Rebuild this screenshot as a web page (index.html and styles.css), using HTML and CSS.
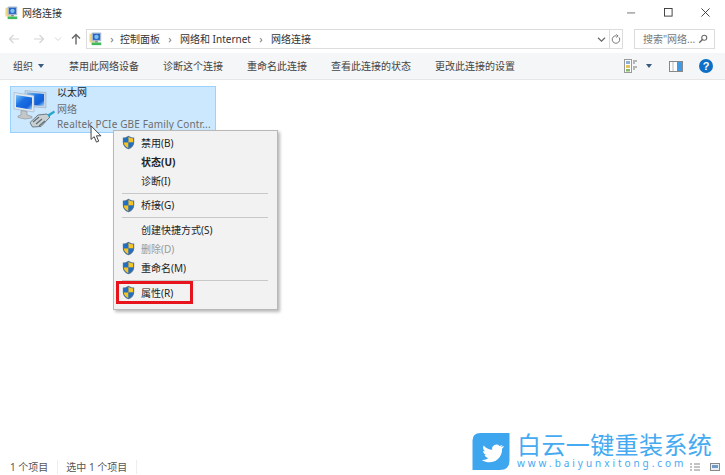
FILE: index.html
```html
<!DOCTYPE html>
<html lang="zh">
<head>
<meta charset="utf-8">
<title>网络连接</title>
<link rel="stylesheet" href="styles.css">
</head>
<body>
<svg class="defs" width="0" height="0" aria-hidden="true">
  <defs>
    <linearGradient id="scr" x1="0" y1="0" x2="1" y2="1">
      <stop offset="0" stop-color="#7cc4f6"/>
      <stop offset=".4" stop-color="#1a70e4"/>
      <stop offset=".75" stop-color="#1260d8"/>
      <stop offset="1" stop-color="#a8d8fa"/>
    </linearGradient>
    <symbol id="shield" viewBox="0 0 14 16">
      <path d="M7 .6C5 2 3 2.600.9 2.700v5.200c0 3.400 2.400 5.900 6.100 7.500 3.700-1.600 6.100-4.100 6.100-7.500V2.700C11 2.600 9 2 7 .6z" fill="#4f7096"/>
      <path d="M7 1.800V8H2V3.700C3.800 3.500 5.500 3 7 1.800z" fill="#1f6fc4"/>
      <path d="M7 1.800c1.500 1.200 3.200 1.700 5 1.900V8H7z" fill="#f8c624"/>
      <path d="M2 8h5v6.100C4 12.700 2 10.700 2 8z" fill="#f8c624"/>
      <path d="M7 8h5c0 2.700-2 4.700-5 6.100z" fill="#1f6fc4"/>
    </symbol>
    <symbol id="net" viewBox="0 0 16 16">
      <rect x="0.500" y="2" width="6" height="10" fill="#f0d884"/>
      <rect x="3" y="0.500" width="11" height="10" rx="1" fill="#a9bbd0"/>
      <rect x="4.500" y="2" width="8" height="7" fill="#2462c8"/>
      <circle cx="8.500" cy="5.500" r="2.500" fill="#7cc0ee"/>
      <rect x="7" y="10" width="3" height="2" fill="#8a8a8a"/>
      <rect x="3" y="12" width="11" height="3" fill="#3fba5a"/>
    </symbol>
  </defs>
</svg>

<div class="window">
  <header class="titlebar">
    <svg class="ti-icon"><use href="#net"/></svg>
    <span class="ti-text">网络连接</span>
    <div class="winbtns">
      <svg class="wb" viewBox="0 0 10 10"><path d="M0 5.500h9" stroke="#666" fill="none"/></svg>
      <svg class="wb" viewBox="0 0 10 10"><rect x=".5" y=".5" width="8.500" height="8.500" stroke="#333" fill="none"/></svg>
      <svg class="wb" viewBox="0 0 10 10"><path d="M.5.500l9 9M9.500.500l-9 9" stroke="#333" fill="none"/></svg>
    </div>
  </header>

  <nav class="addrrow">
    <svg class="nav back" viewBox="0 0 12 12"><path d="M11 6H1.500M5.500 2L1.500 6l4 4" stroke="#d4d4d4" stroke-width="1.200" fill="none"/></svg>
    <svg class="nav fwd" viewBox="0 0 12 12"><path d="M1 6h9.500M6.500 2l4 4-4 4" stroke="#d4d4d4" stroke-width="1.200" fill="none"/></svg>
    <svg class="nav small" viewBox="0 0 8 8"><path d="M1 2.500l3 3 3-3" stroke="#d4d4d4" fill="none"/></svg>
    <svg class="nav up" viewBox="0 0 12 12"><path d="M6 11.500V1.500M2 5.500l4-4 4 4" stroke="#666" stroke-width="1.400" fill="none"/></svg>
    <div class="addrbox">
      <svg class="ad-icon"><use href="#net"/></svg>
      <span class="chev">›</span><span>控制面板</span>
      <span class="chev">›</span><span>网络和 Internet</span>
      <span class="chev">›</span><span>网络连接</span>
      <svg class="drop" viewBox="0 0 10 8"><path d="M1 2l4 4 4-4" stroke="#666" stroke-width="1.300" fill="none"/></svg>
      <div class="refresh">
        <svg viewBox="0 0 12 12" width="10" height="11"><path d="M9.700 3.500A4.500 4.500 0 1 1 6 1.500M6 0l2.500 1.700L6 3.500" stroke="#777" stroke-width="1.200" fill="none"/></svg>
      </div>
    </div>
    <div class="search">
      <span>搜索"网络...</span>
      <svg viewBox="0 0 12 12" width="10" height="10"><circle cx="7.500" cy="4.500" r="3" stroke="#666" stroke-width="1.300" fill="none"/><path d="M5.300 6.700L1.500 10.500" stroke="#666" stroke-width="1.600"/></svg>
    </div>
  </nav>

  <div class="toolbar">
    <span class="tb-first">组织<i class="caret"></i></span>
    <span>禁用此网络设备</span>
    <span>诊断这个连接</span>
    <span>重命名此连接</span>
    <span>查看此连接的状态</span>
    <span>更改此连接的设置</span>
    <div class="tb-right">
      <svg class="view" viewBox="0 0 14 14"><rect x=".5" y=".5" width="7" height="13" fill="#fff" stroke="#999"/><rect x="2" y="2" width="4" height="3" fill="#8bb0d8"/><rect x="2" y="6" width="4" height="3" fill="#e3c35e"/><rect x="2" y="10" width="4" height="2.500" fill="#86b96a"/><path d="M9 2h4M9 4h2M9 8h4M9 10h2" stroke="#777"/></svg>
      <i class="caret dark"></i>
      <svg class="pane" viewBox="0 0 14 11"><rect x=".5" y=".5" width="13" height="10" fill="#fff" stroke="#888"/><rect x="8" y="1" width="5" height="9" fill="#3f9be8"/><path d="M4 1v9" stroke="#bbb"/></svg>
      <svg class="help" viewBox="0 0 14 14"><circle cx="7" cy="7" r="7" fill="#0f6fc6"/><text x="7" y="11" text-anchor="middle" class="qm">?</text></svg>
    </div>
  </div>

  <main class="content">
    <div class="item">
      <svg class="bigicon" viewBox="0 0 42 42">
        <path d="M12 1.500l21 2v15.500l-21-2z" fill="#c3d3e3" stroke="#8ea4ba" stroke-width=".5"/>
        <path d="M14 3.500l17 1.600v12L14 15.500z" fill="url(#scr)"/>
        <path d="M1 3.500l20 3V23L1 20z" fill="#dfe7ef" stroke="#8ea4ba" stroke-width=".5"/>
        <path d="M3 6l16 2.400v12.400L3 18z" fill="url(#scr)"/>
        <path d="M8 21.500l6 1v3.500l5 1.500v1.500l-7 1-7-1.500V27l3-1z" fill="#c4c6c8" stroke="#8b9096" stroke-width=".6"/>
        <path d="M17 33.500l8-7.500 9-1 3 3-9 9.500-8.500.5z" fill="#c8d0d4" stroke="#6f7c82"/>
        <path d="M20 33l6-5M23 35l6-5M26 37l6-5" stroke="#5f6c72" stroke-width="1.200"/>
        <path d="M34.500 25.500l6.500-4 1 2-6.500 4.500z" fill="#2ca6c8"/>
      </svg>
      <div class="item-text">
        <div class="it-name">以太网</div>
        <div class="it-sub">网络</div>
        <div class="it-sub wide">Realtek PCIe GBE Family Contr...</div>
      </div>
    </div>
  </main>

  <footer class="status">
    <span class="st-a">1 个项目</span>
    <span class="st-b">选中 1 个项目</span>
    <div class="st-views">
      <svg class="sv" viewBox="0 0 10 8"><path d="M0 1h2M0 4h2M0 7h2M4 1h6M4 4h6M4 7h6" stroke="#888"/></svg>
      <svg class="sv" viewBox="0 0 10 8"><rect x=".5" y=".5" width="9" height="7" fill="#e8eef4" stroke="#888"/><rect x="2" y="2" width="6" height="3" fill="#6d9cc8"/></svg>
    </div>
  </footer>
</div>

<svg class="cursor" viewBox="0 0 13 20"><path d="M1 1v15l3.500-3 2.500 6 2.500-1-2.500-6h5z" fill="#fff" stroke="#333"/></svg>

<div class="menu">
  <div class="mi"><svg class="sh"><use href="#shield"/></svg>禁用(B)</div>
  <div class="mi strong">状态(U)</div>
  <div class="mi">诊断(I)</div>
  <div class="sep"></div>
  <div class="mi"><svg class="sh"><use href="#shield"/></svg>桥接(G)</div>
  <div class="sep"></div>
  <div class="mi">创建快捷方式(S)</div>
  <div class="mi off"><svg class="sh"><use href="#shield"/></svg>删除(D)</div>
  <div class="mi"><svg class="sh"><use href="#shield"/></svg>重命名(M)</div>
  <div class="sep"></div>
  <div class="mi"><svg class="sh"><use href="#shield"/></svg>属性(R)</div>
  <div class="redbox"></div>
</div>

<div class="brand">
  <svg class="bird" viewBox="0 0 38 38">
    <path d="M8 0H38V28Q38 38 28 38H0V8Q0 0 8 0z" fill="#3ea6ee"/>
    <path transform="translate(4 4) scale(.88)" d="M31 11c-1 .6-2 .8-3 1 1-.7 1.900-1.700 2.200-2.800-1 .6-2 1-3.200 1.300a5 5 0 0 0-8.500 4.600c-4-.2-7.600-2.100-10-5-1.300 2.300-.6 5.200 1.500 6.600-.8 0-1.500-.2-2.200-.6 0 2.400 1.700 4.500 4 5-.7.200-1.500.2-2.200.1.600 2 2.500 3.400 4.600 3.500-2.300 1.800-5.200 2.600-8 2.200 6 3.800 13.500 3.600 18.300-.4 4-3.300 5.800-8.300 5.400-12.800 1-.7 1.800-1.600 2.400-2.700z" fill="#fff"/>
  </svg>
  <div class="brand-text">
    <div class="b-cn">白云一键重装系统</div>
    <div class="b-en">www.baiyunxitong.com</div>
  </div>
</div>
```

FILE: styles.css
```css
* { box-sizing: border-box; }
html, body { margin: 0; padding: 0; height: 100%; }
body {
  width: 725px; height: 475px; overflow: hidden; position: relative;
  background: #fff; color: #333;
  font: 10px/14px "Noto Sans", "Noto Sans CJK SC", sans-serif;
}
.defs { position: absolute; }
.window { display: flex; flex-direction: column; height: 475px; }

.titlebar { height: 26px; display: flex; align-items: center; padding: 0 0 1px 5px; flex: none; }
.ti-icon { width: 14px; height: 14px; margin-right: 3px; }
.ti-text { color: #333; }
.winbtns { margin-left: auto; display: flex; gap: 28px; padding-right: 15px; align-items: center; }
.wb { width: 9px; height: 9px; }

.addrrow { height: 26px; display: flex; align-items: center; padding-left: 8px; flex: none; }
.nav { width: 12px; height: 12px; flex: none; }
.nav.back { margin-right: 13px; }
.nav.fwd { margin-right: 9px; }
.nav.small { width: 8px; height: 8px; margin-right: 8px; }
.nav.up { margin-right: 4px; }
.addrbox {
  width: 537px; height: 20px; border: 1px solid #dcdcdc; display: flex; align-items: center;
  padding-left: 2px; color: #333; flex: none;
}
.ad-icon { width: 14px; height: 14px; margin-right: -1px; }
.chev { width: 10px; margin: 0 5px; text-align: center; color: #777; font-size: 11px; }
.ad-icon + .chev { margin-right: 3px; }
.drop { width: 9px; height: 7px; margin-left: auto; margin-right: 3px; }
.refresh { width: 13px; height: 18px; border-left: 1px solid #dcdcdc; display: flex; align-items: center; justify-content: center; }
.search {
  width: 81px; height: 20px; margin-left: 11px; border: 1px solid #dcdcdc; display: flex; align-items: center;
  justify-content: space-between; padding: 0 6px 0 8px; color: #777; flex: none; white-space: nowrap;
}

.toolbar {
  height: 27px; background: #f5f6f7; border-bottom: 1px solid #e6e6e6; display: flex; align-items: center;
  padding-left: 13px; margin-top: 1px; flex: none; color: #444;
}
.toolbar > span { margin-right: 24px; white-space: nowrap; }
.toolbar > .tb-first { margin-right: 25px; display: flex; align-items: center; }
.caret { display: inline-block; width: 0; height: 0; border: 3.500px solid transparent; border-top: 4px solid #3a5a80; border-bottom: 0; margin-left: 5px; }
.caret.dark { margin: 0 0 0 8px; }
.tb-right { margin-left: auto; display: flex; align-items: center; padding-right: 12px; }
.view { width: 14px; height: 14px; }
.pane { width: 14px; height: 11px; margin-left: 17px; }
.help { width: 14px; height: 14px; margin-left: 16px; }
.qm { font: bold 11px "Liberation Sans", sans-serif; fill: #fff; }

.content { flex: 1; padding: 6px 10px; }
.item {
  width: 206px; height: 47px; background: #cce8ff; border: 1px solid #99d1ff; display: flex;
  padding: 0 0 0 2px;
}
.bigicon { width: 42px; height: 42px; margin: 2px 2px 0 0; flex: none; }
.item-text { line-height: 15px; margin-top: -2px; }
.it-name { color: #222; margin-bottom: 2px; }
.it-sub { color: #6d6d6d; }
.it-sub.wide { letter-spacing: 0.15px; white-space: nowrap; }

.status { height: 20px; display: flex; align-items: center; padding: 3px 0 0 10px; color: #555; flex: none; }
.st-a { padding-right: 9px; border-right: 1px solid #eee; margin-right: 8px; }
.st-b { padding-right: 9px; border-right: 1px solid #eee; }
.st-views { margin-left: auto; display: flex; gap: 10px; padding-right: 5px; }
.sv { width: 10px; height: 8px; }

.cursor { position: absolute; left: 90px; top: 125px; width: 12px; height: 18px; }

.menu {
  position: absolute; left: 113px; top: 130px; width: 165px; height: 180px;
  background: #f2f2f2; border: 1px solid #b8b8b8; box-shadow: 2px 2px 3px rgba(0,0,0,.28);
  padding: 2px 2px;
}
.mi { height: 19px; display: flex; align-items: center; padding-left: 25px; position: relative; color: #222; }
.mi.strong { font-weight: 700; }
.mi.off { color: #9a9a9a; }
.sh { position: absolute; left: 6px; top: 2px; width: 13px; height: 15px; }
.sep { height: 1px; background: #c8c8c8; margin: 2.500px 7px 2.200px 6px; }
.redbox { position: absolute; left: 2px; top: 150px; width: 77px; height: 23px; border: 3px solid #e8141c; }

.brand { position: absolute; left: 472px; top: 432px; display: flex; gap: 7px; }
.bird { width: 38px; height: 37px; margin-top: 1px; flex: none; }
.brand-text { color: #45aaf0; }
.b-cn { font-size: 24px; line-height: 25px; white-space: nowrap; letter-spacing: .4px; }
.b-en { font-size: 10px; line-height: 12px; letter-spacing: 2.950px; white-space: nowrap; }
```
